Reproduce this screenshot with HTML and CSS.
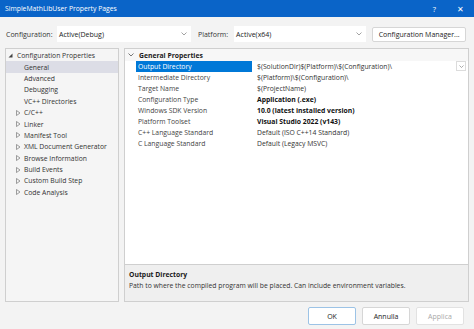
FILE: index.html
```html
<!DOCTYPE html>
<html lang="it">
<head>
    <meta charset="UTF-8">
    <title>SimpleMathLibUser Property Pages</title>
    <link rel="stylesheet" href="styles.css">
</head>
<body>
    <div class="titlebar">
        <span class="title">SimpleMathLibUser Property Pages</span>
        <span class="caption-btns">
            <span class="cap-help">?</span>
            <span class="cap-close">✕</span>
        </span>
    </div>

    <div class="toolbar">
        <span class="label">Configuration:</span>
        <div class="combo combo-config">
            <span>Active(Debug)</span>
            <svg class="arrow" width="6" height="4" viewBox="0 0 6 4"><path d="M0.5 0.5 L3 3 L5.5 0.5" fill="none" stroke="#8a8a8a" stroke-width="0.8"/></svg>
        </div>
        <span class="label label-platform">Platform:</span>
        <div class="combo combo-platform">
            <span>Active(x64)</span>
            <svg class="arrow" width="6" height="4" viewBox="0 0 6 4"><path d="M0.5 0.5 L3 3 L5.5 0.5" fill="none" stroke="#8a8a8a" stroke-width="0.8"/></svg>
        </div>
        <button class="btn btn-manager">Configuration Manager...</button>
    </div>

    <div class="main">
        <div class="tree">
            <div class="node root">
                <svg class="tri" width="5" height="5" viewBox="0 0 5 5"><path d="M4.5 0.5 L4.5 4.5 L0.5 4.5 Z" fill="#444"/></svg>
                Configuration Properties
            </div>
            <div class="node leaf selected">General</div>
            <div class="node leaf">Advanced</div>
            <div class="node leaf">Debugging</div>
            <div class="node leaf">VC++ Directories</div>
            <div class="node branch"><svg class="tri" width="5" height="6" viewBox="0 0 5 6"><path d="M0.5 0.5 L4 3 L0.5 5.5 Z" fill="none" stroke="#777" stroke-width="0.7"/></svg>C/C++</div>
            <div class="node branch"><svg class="tri" width="5" height="6" viewBox="0 0 5 6"><path d="M0.5 0.5 L4 3 L0.5 5.5 Z" fill="none" stroke="#777" stroke-width="0.7"/></svg>Linker</div>
            <div class="node branch"><svg class="tri" width="5" height="6" viewBox="0 0 5 6"><path d="M0.5 0.5 L4 3 L0.5 5.5 Z" fill="none" stroke="#777" stroke-width="0.7"/></svg>Manifest Tool</div>
            <div class="node branch"><svg class="tri" width="5" height="6" viewBox="0 0 5 6"><path d="M0.5 0.5 L4 3 L0.5 5.5 Z" fill="none" stroke="#777" stroke-width="0.7"/></svg>XML Document Generator</div>
            <div class="node branch"><svg class="tri" width="5" height="6" viewBox="0 0 5 6"><path d="M0.5 0.5 L4 3 L0.5 5.5 Z" fill="none" stroke="#777" stroke-width="0.7"/></svg>Browse Information</div>
            <div class="node branch"><svg class="tri" width="5" height="6" viewBox="0 0 5 6"><path d="M0.5 0.5 L4 3 L0.5 5.5 Z" fill="none" stroke="#777" stroke-width="0.7"/></svg>Build Events</div>
            <div class="node branch"><svg class="tri" width="5" height="6" viewBox="0 0 5 6"><path d="M0.5 0.5 L4 3 L0.5 5.5 Z" fill="none" stroke="#777" stroke-width="0.7"/></svg>Custom Build Step</div>
            <div class="node branch"><svg class="tri" width="5" height="6" viewBox="0 0 5 6"><path d="M0.5 0.5 L4 3 L0.5 5.5 Z" fill="none" stroke="#777" stroke-width="0.7"/></svg>Code Analysis</div>
        </div>

        <div class="right">
            <div class="grid">
                <div class="group">
                    <svg class="chev" width="6" height="4" viewBox="0 0 6 4"><path d="M0.5 0.5 L3 3 L5.5 0.5" fill="none" stroke="#555" stroke-width="0.8"/></svg>
                    <span>General Properties</span>
                </div>
                <div class="row selected">
                    <span class="name">Output Directory</span>
                    <span class="value">$(SolutionDir)$(Platform)\$(Configuration)\</span>
                    <span class="drop">
                        <svg width="5" height="3" viewBox="0 0 5 3"><path d="M0.5 0.5 L2.5 2.5 L4.5 0.5" fill="none" stroke="#888" stroke-width="0.7"/></svg>
                    </span>
                </div>
                <div class="row">
                    <span class="name">Intermediate Directory</span>
                    <span class="value">$(Platform)\$(Configuration)\</span>
                </div>
                <div class="row">
                    <span class="name">Target Name</span>
                    <span class="value">$(ProjectName)</span>
                </div>
                <div class="row">
                    <span class="name">Configuration Type</span>
                    <span class="value bold">Application (.exe)</span>
                </div>
                <div class="row">
                    <span class="name">Windows SDK Version</span>
                    <span class="value bold">10.0 (latest installed version)</span>
                </div>
                <div class="row">
                    <span class="name">Platform Toolset</span>
                    <span class="value bold">Visual Studio 2022 (v143)</span>
                </div>
                <div class="row">
                    <span class="name">C++ Language Standard</span>
                    <span class="value">Default (ISO C++14 Standard)</span>
                </div>
                <div class="row">
                    <span class="name">C Language Standard</span>
                    <span class="value">Default (Legacy MSVC)</span>
                </div>
            </div>
            <div class="desc">
                <div class="desc-title">Output Directory</div>
                <div class="desc-text">Path to where the compiled program will be placed. Can include environment variables.</div>
            </div>
        </div>
    </div>

    <div class="footer">
        <button class="btn btn-ok">OK</button>
        <button class="btn">Annulla</button>
        <button class="btn btn-disabled">Applica</button>
    </div>
</body>
</html>
```

FILE: styles.css
```css
* {
    margin: 0;
    padding: 0;
    box-sizing: border-box;
}

body {
    width: 474px;
    height: 329px;
    overflow: hidden;
    font-family: "Segoe UI", "Open Sans", sans-serif;
    font-size: 6.8px;
    color: #1a1a1a;
    background: #f3f3f3;
}

.titlebar {
    height: 17px;
    background: #0a64c8;
    color: white;
    display: flex;
    align-items: center;
    justify-content: space-between;
    padding: 0 10px 0 5px;
}

.caption-btns {
    display: flex;
    gap: 21px;
    font-size: 7.5px;
}

.toolbar {
    display: flex;
    align-items: center;
    padding: 9px 5px 0 6px;
    height: 25px;
}

.label {
    width: 51px;
    color: #333;
    font-size: 7px;
}

.label-platform {
    width: auto;
    margin: 0 6px 0 7px;
}

.combo {
    height: 16px;
    background: white;
    display: flex;
    align-items: center;
    justify-content: space-between;
    padding: 0 4px 0 2px;
    font-size: 7px;
}

.combo-config {
    width: 134px;
}

.combo-platform {
    width: 132px;
}

.btn {
    font-family: inherit;
    font-size: 7px;
    background: white;
    border: 1px solid #d6d6d6;
    border-radius: 2px;
    color: #222;
    height: 17px;
}

.btn-manager {
    width: 94px;
    margin-left: 6px;
    height: 15px;
}

.main {
    display: flex;
    gap: 5px;
    padding: 6px 5px 0 5px;
    height: 260px;
}

.tree {
    width: 114px;
    background: #f5f5f5;
    border: 1px solid #cfcfcf;
    padding-top: 1px;
}

.node {
    height: 11.4px;
    display: flex;
    align-items: center;
    color: #333;
    white-space: nowrap;
}

.node.root {
    padding-left: 2px;
}

.node.root .tri {
    margin-right: 4px;
}

.node.leaf {
    padding-left: 18px;
}

.node.branch {
    padding-left: 10px;
}

.node.branch .tri {
    margin-right: 3px;
}

.node.selected {
    background: #dcdde6;
}

.right {
    flex: 1;
    display: flex;
    flex-direction: column;
}

.grid {
    flex: 1;
    background: white;
    border: 1px solid #cfcfcf;
}

.group {
    height: 12px;
    display: flex;
    align-items: center;
    font-weight: bold;
    background: #f7f7f7;
    padding-left: 3px;
}

.chev {
    margin-right: 5px;
}

.row {
    height: 11px;
    display: flex;
    align-items: center;
    position: relative;
    white-space: nowrap;
}

.name {
    width: 127px;
    padding-left: 13px;
    color: #444;
    height: 100%;
    display: flex;
    align-items: center;
}

.value {
    padding-left: 5px;
    color: #333;
}

.bold {
    font-weight: bold;
    color: #111;
}

.row.selected .name {
    background: #0078d7;
    color: white;
    margin-left: 11px;
    padding-left: 2px;
    width: 116px;
}

.drop {
    position: absolute;
    right: 2px;
    top: 0;
    width: 10px;
    height: 10px;
    border: 1px solid #dcdcdc;
    display: flex;
    align-items: center;
    justify-content: center;
}

.desc {
    height: 37px;
    background: #efefef;
    border: 1px solid #cfcfcf;
    border-top: none;
    padding: 5px 4px;
}

.desc-title {
    font-weight: bold;
    margin-bottom: 2px;
}

.desc-text {
    color: #333;
}

.footer {
    display: flex;
    justify-content: flex-end;
    gap: 6px;
    padding: 5px 10px 0 0;
}

.footer .btn {
    width: 48px;
    height: 18px;
}

.btn-ok {
    border-color: #9cc3e6;
}

.btn-disabled {
    color: #a8a8a8;
    border-color: #e2e2e2;
}
```
